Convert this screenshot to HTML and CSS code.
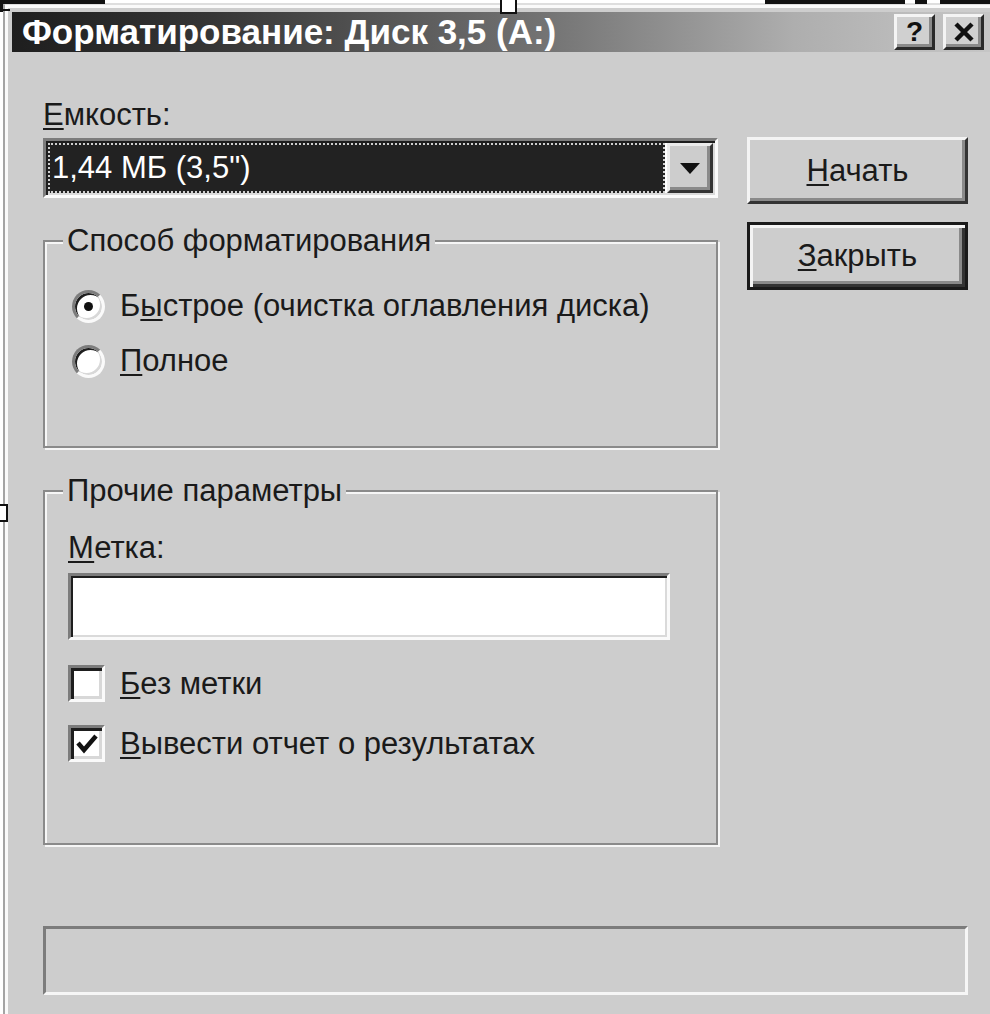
FILE: index.html
```html
<!DOCTYPE html>
<html lang="ru">
<head>
<meta charset="utf-8">
<title>Форматирование</title>
<link rel="stylesheet" href="styles.css">
</head>
<body>
<span class="mark m-tl1"></span>
<span class="mark m-tl2"></span>
<span class="mark m-tl3"></span>
<span class="mark m-tr1"></span>
<span class="mark m-tr2"></span>
<span class="mark m-tr3"></span>
<span class="handle h-top"></span>
<span class="handle h-left"></span>

<div class="window">
  <div class="titlebar">
    <span class="title">Форматирование: Диск 3,5 (А:)</span>
    <div class="tbtns">
      <span class="tbtn">?</span>
      <span class="tbtn"><svg width="22" height="20" viewBox="0 0 22 20"><path d="M3 2 L19 18 M19 2 L3 18" stroke="#111" stroke-width="4.5" fill="none"/></svg></span>
    </div>
  </div>
  <div class="content">
    <div class="row">
      <div class="leftcol">
        <div class="label"><u>Е</u>мкость:</div>
        <div class="combo">
          <div class="sel">1,44 МБ (3,5")</div>
          <div class="drop"><svg width="20" height="11" viewBox="0 0 20 11"><polygon points="0,0 20,0 10,11" fill="#111"/></svg></div>
        </div>
        <div class="group g1">
          <div class="legend">Способ форматирования</div>
          <div class="opt o1"><span class="radio on"></span><span>Б<u>ы</u>строе (очистка оглавления диска)</span></div>
          <div class="opt o2"><span class="radio"></span><span><u>П</u>олное</span></div>
        </div>
        <div class="group g2">
          <div class="legend">Прочие параметры</div>
          <div class="label lab2"><u>М</u>етка:</div>
          <div class="field"></div>
          <div class="opt c1"><span class="check"></span><span><u>Б</u>ез метки</span></div>
          <div class="opt c2"><span class="check"><svg width="22" height="20" viewBox="0 0 22 20"><path d="M2 9 L8 16 L20 2" stroke="#111" stroke-width="4.5" fill="none"/></svg></span><span><u>В</u>ывести отчет о результатах</span></div>
        </div>
      </div>
      <div class="rightcol">
        <div class="btn"><span><u>Н</u>ачать</span></div>
        <div class="btn default"><span><u>З</u>акрыть</span></div>
      </div>
    </div>
    <div class="status"></div>
  </div>
</div>
</body>
</html>
```

FILE: styles.css
```css
html, body {
  margin: 0;
  padding: 0;
}
body {
  background: #ffffff;
  width: 990px;
  height: 1014px;
  overflow: hidden;
  position: relative;
  font-family: "Liberation Sans", Arial, sans-serif;
  color: #1a1a1a;
}

/* selection marks of the document editor, lying over the page */
.mark {
  position: absolute;
  background: #111;
  height: 4px;
  top: 0;
}
.m-tl1 { left: 0; width: 105px; }
.m-tl2 { left: 0; width: 3px; height: 12px; }
.m-tl3 { left: 0; top: 9px; width: 10px; height: 2px; }
.m-tr1 { left: 765px; width: 140px; }
.m-tr2 { left: 915px; width: 12px; }
.m-tr3 { left: 940px; width: 50px; }
.handle {
  position: absolute;
  box-sizing: border-box;
  border: 2px solid #111;
  background: #fff;
}
.h-top { left: 500px; top: -3px; width: 17px; height: 17px; }
.h-left { left: -9px; top: 504px; width: 17px; height: 18px; }

.window {
  margin: 3px 0 0 3px;
  width: 987px;
  height: 1011px;
  overflow: hidden;
  box-sizing: border-box;
  background: #cdcdcd;
  border-left: 2px solid #a4a4a4;
  border-top: 2px solid #dedede;
  box-shadow: inset 3px 3px 0 #fafafa;
  padding: 7px 0 0 7px;
}

.titlebar {
  width: 978px;
  height: 40px;
  box-sizing: border-box;
  display: flex;
  align-items: center;
  justify-content: space-between;
  padding: 0 6px 0 10px;
  background: linear-gradient(to right, #1e1e1e 0%, #353535 20%, #747474 55%, #aeaeae 80%, #c6c6c6 100%);
}
.title {
  color: #ffffff;
  font-weight: bold;
  font-size: 35px;
  line-height: 40px;
  white-space: nowrap;
}
.tbtns {
  display: flex;
  gap: 8px;
}
.tbtn {
  width: 41px;
  height: 36px;
  box-sizing: border-box;
  display: flex;
  align-items: center;
  justify-content: center;
  background: #d0d0d0;
  border: 3px solid;
  border-color: #f4f4f4 #2a2a2a #2a2a2a #f4f4f4;
  box-shadow: inset -3px -3px 0 #8a8a8a;
  font-weight: bold;
  font-size: 28px;
  color: #111;
  line-height: 1;
}

.content {
  padding: 46px 0 0 31px;
}
.row {
  display: flex;
  align-items: flex-start;
  gap: 27px;
}
.leftcol {
  width: 677px;
}
.rightcol {
  width: 221px;
  margin-top: 39px;
  display: flex;
  flex-direction: column;
  gap: 18px;
}

u {
  text-decoration-thickness: 2px;
  text-underline-offset: 3px;
}

.label {
  font-size: 31px;
  line-height: 34px;
  height: 34px;
}

.combo {
  margin-top: 6px;
  width: 675px;
  height: 60px;
  box-sizing: border-box;
  border: 3px solid;
  border-color: #7c7c7c #fafafa #fafafa #7c7c7c;
  box-shadow: inset 2px 2px 0 #1e1e1e, inset -2px -2px 0 #dadada;
  background: #ffffff;
  padding: 2px;
  display: flex;
  gap: 2px;
}
.sel {
  flex: 1;
  background: #222222;
  color: #ffffff;
  border: 2px dotted #cfcfcf;
  display: flex;
  align-items: center;
  padding-left: 2px;
  font-size: 31px;
  white-space: nowrap;
}
.drop {
  width: 46px;
  box-sizing: border-box;
  background: #cdcdcd;
  border: 3px solid;
  border-color: #ececec #333333 #333333 #ececec;
  box-shadow: inset -3px -3px 0 #8a8a8a;
  display: flex;
  align-items: center;
  justify-content: center;
}

.btn {
  height: 67px;
  box-sizing: border-box;
  display: flex;
  align-items: center;
  justify-content: center;
  border: 3px solid;
  border-color: #f4f4f4 #333333 #333333 #f4f4f4;
  box-shadow: inset -3px -3px 0 #8a8a8a;
  font-size: 31px;
}
.btn.default {
  height: 68px;
  border: 3px solid #1a1a1a;
  box-shadow: inset 3px 3px 0 #f4f4f4, inset -3px -3px 0 #333333, inset -6px -6px 0 #8a8a8a;
}

.group {
  width: 675px;
  box-sizing: border-box;
  border: 2px solid #8a8a8a;
  box-shadow: 2px 2px 0 #f6f6f6, inset 2px 2px 0 #f6f6f6;
  padding: 0 23px;
  margin-top: 42px;
}
.g1 { height: 208px; }
.g2 { height: 355px; }
.legend {
  margin: -19px 0 0 -5px;
  padding: 0 4px;
  width: max-content;
  background: #cdcdcd;
  font-size: 31px;
  line-height: 36px;
}

.opt {
  display: flex;
  align-items: center;
  gap: 15px;
  font-size: 31px;
  line-height: 34px;
  white-space: nowrap;
}
.o1 { margin-top: 30px; height: 34px; }
.o2 { margin-top: 21px; height: 34px; }

.radio {
  flex: none;
  width: 33px;
  height: 33px;
  box-sizing: border-box;
  margin-left: 4px;
  border-radius: 50%;
  border: 3px solid;
  border-color: #7c7c7c #fafafa #fafafa #7c7c7c;
  box-shadow: inset 2px 2px 0 #1e1e1e, inset -2px -2px 0 #d8d8d8;
  background: #ffffff;
  display: flex;
  align-items: center;
  justify-content: center;
}
.radio.on::after {
  content: "";
  width: 9px;
  height: 9px;
  border-radius: 50%;
  background: #111111;
}

.lab2 { margin-top: 22px; }
.field {
  margin-top: 8px;
  width: 602px;
  height: 67px;
  box-sizing: border-box;
  border: 3px solid;
  border-color: #7c7c7c #fafafa #fafafa #7c7c7c;
  box-shadow: inset 2px 2px 0 #1e1e1e, inset -2px -2px 0 #dadada;
  background: #ffffff;
}
.c1 { margin-top: 25px; height: 37px; }
.c2 { margin-top: 23px; height: 37px; }
.check {
  flex: none;
  width: 37px;
  height: 37px;
  box-sizing: border-box;
  border: 3px solid;
  border-color: #7c7c7c #fafafa #fafafa #7c7c7c;
  box-shadow: inset 3px 3px 0 #1e1e1e, inset -3px -3px 0 #d8d8d8;
  background: #ffffff;
  display: flex;
  align-items: center;
  justify-content: center;
}

.status {
  margin-top: 81px;
  width: 925px;
  height: 69px;
  box-sizing: border-box;
  border: 3px solid;
  border-color: #7c7c7c #f6f6f6 #f6f6f6 #7c7c7c;
}
```
